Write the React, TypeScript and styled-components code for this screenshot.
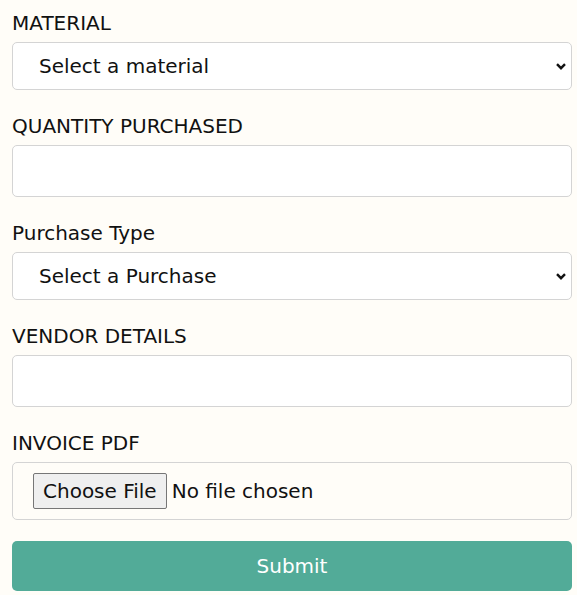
import styled, { createGlobalStyle } from "styled-components"

const GlobalStyle = createGlobalStyle`
    body {
        margin: 0;
        background-color: #fffdf8;
        font-family: "DejaVu Sans", Verdana, sans-serif;
        color: #111;
    }
`

const FormWrapper = styled.form`
    display: flex;
    flex-direction: column;
    width: 560px;
    padding: 12px 0 0 12px;
`

const Field = styled.div<{ $gap?: number }>`
    display: flex;
    flex-direction: column;
    margin-bottom: ${(p) => (p.$gap ?? 25)}px;
`

const Label = styled.label`
    font-size: 20px;
    line-height: 23px;
    margin-bottom: 7px;
`

const SelectWrapper = styled.div`
    position: relative;
    width: 100%;
`

const Select = styled.select`
    box-sizing: border-box;
    appearance: none;
    height: 48px;
    width: 100%;
    padding: 0 30px 0 26px;
    font-family: "DejaVu Sans", Verdana, sans-serif;
    font-size: 20px;
    color: #111;
    background-color: #fff;
    border: 1px solid #d4d4d4;
    border-radius: 5px;
    outline: none;
`

const Chevron = styled.svg`
    position: absolute;
    right: 6px;
    top: 50%;
    width: 10px;
    height: 7px;
    margin-top: -3px;
    pointer-events: none;
`

const TextInput = styled.input`
    box-sizing: border-box;
    height: 52px;
    width: 100%;
    padding: 0 20px;
    font-family: "DejaVu Sans", Verdana, sans-serif;
    font-size: 20px;
    background-color: #fff;
    border: 1px solid #d4d4d4;
    border-radius: 5px;
    outline: none;
`

const FileInput = styled.input`
    box-sizing: border-box;
    height: 58px;
    width: 100%;
    padding: 10px 20px;
    font-family: "DejaVu Sans", Verdana, sans-serif;
    font-size: 20px;
    color: #111;
    background-color: #fffdf8;
    border: 1px solid #d4d4d4;
    border-radius: 5px;

    &::file-selector-button {
        box-sizing: border-box;
        height: 36px;
        margin: 0 5px 0 0;
        padding: 0 9px;
        font-family: "DejaVu Sans", Verdana, sans-serif;
        font-size: 20px;
        color: #111;
        background-color: #efefef;
        border: 1px solid #767676;
        border-radius: 2px;
    }
`

const SubmitButton = styled.button`
    height: 50px;
    width: 100%;
    font-family: "DejaVu Sans", Verdana, sans-serif;
    font-size: 20px;
    color: #fff;
    background-color: #52ab98;
    border: none;
    border-radius: 5px;
    cursor: pointer;
`

function SelectBox({ placeholder }: { placeholder: string }) {
    return (<SelectWrapper>
        <Select defaultValue="">
            <option value="">{placeholder}</option>
        </Select>
        <Chevron viewBox="0 0 10 7">
            <polyline points="1,1.2 5,5.2 9,1.2" fill="none" stroke="#111" strokeWidth="2.4" />
        </Chevron>
    </SelectWrapper>)
}

function App() {
    return (<>
        <GlobalStyle />
        <FormWrapper onSubmit={(e) => e.preventDefault()}>
            <Field>
                <Label>MATERIAL</Label>
                <SelectBox placeholder="Select a material" />
            </Field>
            <Field>
                <Label>QUANTITY PURCHASED</Label>
                <TextInput type="text" />
            </Field>
            <Field>
                <Label>Purchase Type</Label>
                <SelectBox placeholder="Select a Purchase" />
            </Field>
            <Field>
                <Label>VENDOR DETAILS</Label>
                <TextInput type="text" />
            </Field>
            <Field $gap={21}>
                <Label>INVOICE PDF</Label>
                <FileInput type="file" accept="application/pdf" />
            </Field>
            <SubmitButton type="submit">Submit</SubmitButton>
        </FormWrapper>
    </>)
}
export default App
